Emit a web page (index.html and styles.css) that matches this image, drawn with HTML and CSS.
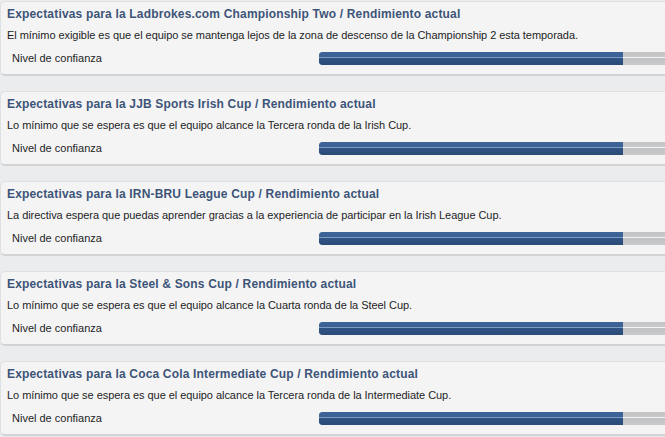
FILE: index.html
```html
<!DOCTYPE html>
<html>
<head>
<meta charset="utf-8">
<link rel="stylesheet" href="styles.css">
</head>
<body>
<div class="list">
  <div class="card">
    <div class="title">Expectativas para la Ladbrokes.com Championship Two / Rendimiento actual</div>
    <div class="desc">El mínimo exigible es que el equipo se mantenga lejos de la zona de descenso de la Championship 2 esta temporada.</div>
    <div class="row"><span class="label">Nivel de confianza</span><div class="bar"><div class="fill" style="width:304px"></div></div></div>
  </div>
  <div class="card">
    <div class="title">Expectativas para la JJB Sports Irish Cup / Rendimiento actual</div>
    <div class="desc">Lo mínimo que se espera es que el equipo alcance la Tercera ronda de la Irish Cup.</div>
    <div class="row"><span class="label">Nivel de confianza</span><div class="bar"><div class="fill" style="width:304px"></div></div></div>
  </div>
  <div class="card">
    <div class="title">Expectativas para la IRN-BRU League Cup / Rendimiento actual</div>
    <div class="desc">La directiva espera que puedas aprender gracias a la experiencia de participar en la Irish League Cup.</div>
    <div class="row"><span class="label">Nivel de confianza</span><div class="bar"><div class="fill" style="width:304px"></div></div></div>
  </div>
  <div class="card">
    <div class="title">Expectativas para la Steel &amp; Sons Cup / Rendimiento actual</div>
    <div class="desc">Lo mínimo que se espera es que el equipo alcance la Cuarta ronda de la Steel Cup.</div>
    <div class="row"><span class="label">Nivel de confianza</span><div class="bar"><div class="fill" style="width:304px"></div></div></div>
  </div>
  <div class="card">
    <div class="title">Expectativas para la Coca Cola Intermediate Cup / Rendimiento actual</div>
    <div class="desc">Lo mínimo que se espera es que el equipo alcance la Tercera ronda de la Intermediate Cup.</div>
    <div class="row"><span class="label">Nivel de confianza</span><div class="bar"><div class="fill" style="width:304px"></div></div></div>
  </div>
</div>
</body>
</html>
```
FILE: styles.css
```css
html, body {
  margin: 0;
  padding: 0;
  background: #ebeced;
  overflow: hidden;
  width: 665px;
  height: 437px;
}
.list {
  display: flex;
  flex-direction: column;
  gap: 15px;
  padding-top: 1px;
  width: 665px;
}
.card {
  box-sizing: border-box;
  height: 75px;
  background: #f4f4f5;
  border: 1px solid #dfe0e1;
  border-right: none;
  border-bottom: 2px solid #d2d3d4;
  border-radius: 5px 0 0 5px;
  padding: 3px 0 0 6px;
  font-family: "Liberation Sans", Arial, sans-serif;
  color: #222;
  overflow: hidden;
}
.title {
  font-weight: bold;
  font-size: 12px;
  line-height: 18px;
  color: #3d5478;
  letter-spacing: 0.17px;
  white-space: nowrap;
}
.desc {
  font-size: 11px;
  line-height: 16px;
  margin-top: 4px;
  color: #1e1e1e;
  letter-spacing: -0.05px;
  white-space: nowrap;
}
.row {
  display: flex;
  align-items: center;
  height: 18px;
  margin-top: 5px;
}
.label {
  font-size: 11px;
  padding-left: 5px;
  width: 307px;
  flex: none;
  color: #1e1e1e;
  position: relative;
  top: 1px;
}
.bar {
  flex: 1;
  min-width: 0;
  height: 13px;
  border-radius: 3px 0 0 3px;
  background: linear-gradient(#c3c4c5 0, #c7c8c9 5px, #f4f4f4 5px, #f4f4f4 6px, #c0c1c2 6px, #c9cacb 13px);
  overflow: hidden;
  position: relative;
  top: 1px;
}
.fill {
  height: 13px;
  border-radius: 3px 0 0 3px;
  background: linear-gradient(#3e659a 0, #3a6094 5px, #7d9cc4 5px, #7d9cc4 6px, #2f5483 6px, #2b4b78 13px);
}
```
